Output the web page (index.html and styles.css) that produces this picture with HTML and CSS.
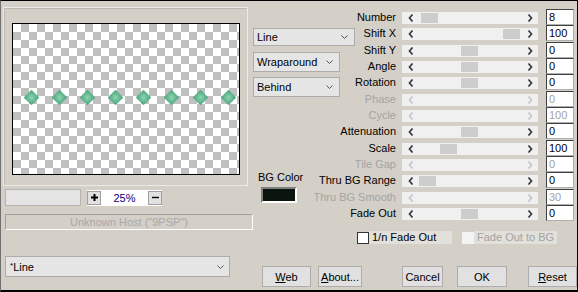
FILE: index.html
```html
<!DOCTYPE html>
<html lang="en">

<head>
    <meta charset="UTF-8">
    <title>Line Filter</title>
    <link rel="stylesheet" href="styles.css">
</head>

<body>
    <div class="dialog">
        <div class="main">
            <!-- Preview side -->
            <div class="left">
                <div class="preview">
                    <div class="canvas">
                        <div class="gem"></div>
                        <div class="gem"></div>
                        <div class="gem"></div>
                        <div class="gem"></div>
                        <div class="gem"></div>
                        <div class="gem"></div>
                        <div class="gem"></div>
                        <div class="gem"></div>
                    </div>
                </div>
                <div class="zoom-row">
                    <div class="zoom-field"></div>
                    <div class="zoom-ctl">
                        <span class="zoom-btn"><svg width="7" height="7" viewBox="0 0 7 7"><path d="M3.5 0v7M0 3.5h7" stroke="#000" stroke-width="2"/></svg></span>
                        <span class="zoom-val">25%</span>
                        <span class="zoom-btn"><svg width="7" height="7" viewBox="0 0 7 7"><path d="M0 3.5h7" stroke="#000" stroke-width="1.4"/></svg></span>
                    </div>
                </div>
                <div class="host">Unknown Host ("9PSP")</div>
            </div>

            <!-- Mode selects and background colour -->
            <div class="middle">
                <div class="select select-line">Line <svg class="chev" width="7" height="4" viewBox="0 0 7 4"><path d="M0.5 0.5l3 3 3-3"/></svg></div>
                <div class="select select-short gap-wrap">Wraparound <svg class="chev" width="7" height="4" viewBox="0 0 7 4"><path d="M0.5 0.5l3 3 3-3"/></svg></div>
                <div class="select select-short gap-behind">Behind <svg class="chev" width="7" height="4" viewBox="0 0 7 4"><path d="M0.5 0.5l3 3 3-3"/></svg></div>
                <div class="bg-label">BG Color</div>
                <div class="swatch"></div>
            </div>

            <!-- Parameter sliders -->
            <div class="params">
                <div class="grid">
                    <div class="label">Number</div>
                    <div class="scroll"><span class="arrow"><svg width="6" height="8" viewBox="0 0 6 8"><path d="M4.5 0.5L1.5 4l3 3.5"/></svg></span><span class="track"><span class="thumb" style="margin-left: 2px"></span></span><span class="arrow"><svg width="6" height="8" viewBox="0 0 6 8"><path d="M1.5 0.5L4.5 4l-3 3.5"/></svg></span></div>
                    <div class="value">8</div>

                    <div class="label">Shift X</div>
                    <div class="scroll"><span class="arrow"><svg width="6" height="8" viewBox="0 0 6 8"><path d="M4.5 0.5L1.5 4l3 3.5"/></svg></span><span class="track"><span class="thumb" style="margin-left: 84px"></span></span><span class="arrow"><svg width="6" height="8" viewBox="0 0 6 8"><path d="M1.5 0.5L4.5 4l-3 3.5"/></svg></span></div>
                    <div class="value">100</div>

                    <div class="label">Shift Y</div>
                    <div class="scroll"><span class="arrow"><svg width="6" height="8" viewBox="0 0 6 8"><path d="M4.5 0.5L1.5 4l3 3.5"/></svg></span><span class="track"><span class="thumb" style="margin-left: 42px"></span></span><span class="arrow"><svg width="6" height="8" viewBox="0 0 6 8"><path d="M1.5 0.5L4.5 4l-3 3.5"/></svg></span></div>
                    <div class="value">0</div>

                    <div class="label">Angle</div>
                    <div class="scroll"><span class="arrow"><svg width="6" height="8" viewBox="0 0 6 8"><path d="M4.5 0.5L1.5 4l3 3.5"/></svg></span><span class="track"><span class="thumb" style="margin-left: 42px"></span></span><span class="arrow"><svg width="6" height="8" viewBox="0 0 6 8"><path d="M1.5 0.5L4.5 4l-3 3.5"/></svg></span></div>
                    <div class="value">0</div>

                    <div class="label">Rotation</div>
                    <div class="scroll"><span class="arrow"><svg width="6" height="8" viewBox="0 0 6 8"><path d="M4.5 0.5L1.5 4l3 3.5"/></svg></span><span class="track"><span class="thumb" style="margin-left: 42px"></span></span><span class="arrow"><svg width="6" height="8" viewBox="0 0 6 8"><path d="M1.5 0.5L4.5 4l-3 3.5"/></svg></span></div>
                    <div class="value">0</div>

                    <div class="label off">Phase</div>
                    <div class="scroll off"><span class="arrow"><svg width="6" height="8" viewBox="0 0 6 8"><path d="M4.5 0.5L1.5 4l3 3.5"/></svg></span><span class="track"></span><span class="arrow"><svg width="6" height="8" viewBox="0 0 6 8"><path d="M1.5 0.5L4.5 4l-3 3.5"/></svg></span></div>
                    <div class="value off">0</div>

                    <div class="label off">Cycle</div>
                    <div class="scroll off"><span class="arrow"><svg width="6" height="8" viewBox="0 0 6 8"><path d="M4.5 0.5L1.5 4l3 3.5"/></svg></span><span class="track"></span><span class="arrow"><svg width="6" height="8" viewBox="0 0 6 8"><path d="M1.5 0.5L4.5 4l-3 3.5"/></svg></span></div>
                    <div class="value off">100</div>

                    <div class="label">Attenuation</div>
                    <div class="scroll"><span class="arrow"><svg width="6" height="8" viewBox="0 0 6 8"><path d="M4.5 0.5L1.5 4l3 3.5"/></svg></span><span class="track"><span class="thumb" style="margin-left: 42px"></span></span><span class="arrow"><svg width="6" height="8" viewBox="0 0 6 8"><path d="M1.5 0.5L4.5 4l-3 3.5"/></svg></span></div>
                    <div class="value">0</div>

                    <div class="label">Scale</div>
                    <div class="scroll"><span class="arrow"><svg width="6" height="8" viewBox="0 0 6 8"><path d="M4.5 0.5L1.5 4l3 3.5"/></svg></span><span class="track"><span class="thumb" style="margin-left: 21px"></span></span><span class="arrow"><svg width="6" height="8" viewBox="0 0 6 8"><path d="M1.5 0.5L4.5 4l-3 3.5"/></svg></span></div>
                    <div class="value">100</div>

                    <div class="label off">Tile Gap</div>
                    <div class="scroll off"><span class="arrow"><svg width="6" height="8" viewBox="0 0 6 8"><path d="M4.5 0.5L1.5 4l3 3.5"/></svg></span><span class="track"></span><span class="arrow"><svg width="6" height="8" viewBox="0 0 6 8"><path d="M1.5 0.5L4.5 4l-3 3.5"/></svg></span></div>
                    <div class="value off">0</div>

                    <div class="label">Thru BG Range</div>
                    <div class="scroll"><span class="arrow"><svg width="6" height="8" viewBox="0 0 6 8"><path d="M4.5 0.5L1.5 4l3 3.5"/></svg></span><span class="track"><span class="thumb" style="margin-left: 0px"></span></span><span class="arrow"><svg width="6" height="8" viewBox="0 0 6 8"><path d="M1.5 0.5L4.5 4l-3 3.5"/></svg></span></div>
                    <div class="value">0</div>

                    <div class="label off">Thru BG Smooth</div>
                    <div class="scroll off"><span class="arrow"><svg width="6" height="8" viewBox="0 0 6 8"><path d="M4.5 0.5L1.5 4l3 3.5"/></svg></span><span class="track"></span><span class="arrow"><svg width="6" height="8" viewBox="0 0 6 8"><path d="M1.5 0.5L4.5 4l-3 3.5"/></svg></span></div>
                    <div class="value off">30</div>

                    <div class="label">Fade Out</div>
                    <div class="scroll"><span class="arrow"><svg width="6" height="8" viewBox="0 0 6 8"><path d="M4.5 0.5L1.5 4l3 3.5"/></svg></span><span class="track"><span class="thumb" style="margin-left: 42px"></span></span><span class="arrow"><svg width="6" height="8" viewBox="0 0 6 8"><path d="M1.5 0.5L4.5 4l-3 3.5"/></svg></span></div>
                    <div class="value">0</div>
                </div>

                <div class="checks">
                    <span class="check-box"></span>
                    <span class="check-text">1/n Fade Out</span>
                    <span class="check-box off"></span>
                    <span class="check-text off">Fade Out to BG</span>
                </div>
            </div>
        </div>

        <div class="footer">
            <div class="select select-wide"><span><span class="star">*</span>Line</span> <svg class="chev" width="7" height="4" viewBox="0 0 7 4"><path d="M0.5 0.5l3 3 3-3"/></svg></div>
            <div class="btn btn-web"><span><u>W</u>eb</span></div>
            <div class="btn btn-about"><span><u>A</u>bout...</span></div>
            <div class="btn btn-cancel">Cancel</div>
            <div class="btn btn-ok">OK</div>
            <div class="btn btn-reset"><span><u>R</u>eset</span></div>
        </div>
    </div>
</body>

</html>
```

FILE: styles.css
```css
body {
    margin: 0;
    font-family: "Liberation Sans", Arial, sans-serif;
    font-size: 11px;
    color: #000;
}

.dialog {
    width: 578px;
    height: 292px;
    box-sizing: border-box;
    background: #d4d0c8;
    border-top: 1px solid #000;
    border-left: 1px solid #707070;
    border-right: 1px solid #000;
    border-bottom: 2px solid #000;
    display: flex;
    flex-direction: column;
}

.main {
    display: flex;
    height: 255px;
}

/* Preview */
.left {
    width: 252px;
    flex: none;
}

.preview {
    margin: 6px 0 0 2px;
    width: 245px;
    height: 179px;
    box-sizing: border-box;
    border: 1px solid #eceae5;
    box-shadow: inset 1px 1px 0 #bdb9b0;
    padding: 15px 0 0 8px;
}

.canvas {
    width: 228px;
    height: 152px;
    box-sizing: border-box;
    border: 1px solid #000;
    background-color: #fff;
    background-image: conic-gradient(#c0c0c0 25%, #fff 0 50%, #c0c0c0 0 75%, #fff 0);
    background-size: 16px 16px;
    display: flex;
    align-items: flex-start;
    padding: 68px 0 0 13px;
    gap: 17.1px;
}

.gem {
    flex: none;
    width: 11px;
    height: 11px;
    border-radius: 1px;
    transform: rotate(45deg);
    background: radial-gradient(circle, #8dd4b0 0%, #64b991 55%, #47a078 100%);
}

.zoom-row {
    display: flex;
    align-items: center;
    margin: 3px 0 0 4px;
    height: 17px;
}

.zoom-field {
    width: 76px;
    height: 17px;
    box-sizing: border-box;
    background: #e4e4e4;
    border: 1px solid #b4b4b4;
}

.zoom-ctl {
    margin-left: 6px;
    width: 75px;
    height: 16px;
    background: #fff;
    display: flex;
    align-items: center;
    justify-content: space-between;
}

.zoom-btn {
    width: 14px;
    height: 14px;
    box-sizing: border-box;
    background: #e1e1e1;
    border: 1px solid #a0a0a0;
    display: flex;
    align-items: center;
    justify-content: center;
}

.zoom-val {
    color: #000080;
}

.host {
    margin: 8px 0 0 4px;
    width: 248px;
    height: 16px;
    box-sizing: border-box;
    border: 1px solid;
    border-color: #a0a0a0 #fff #fff #a0a0a0;
    color: #a8a8a8;
    text-align: center;
    line-height: 14px;
}

/* Selects */
.select {
    display: flex;
    align-items: center;
    justify-content: space-between;
    box-sizing: border-box;
    height: 20px;
    background: #e5e5e5;
    border: 1px solid #acacac;
    padding: 0 6px 0 3px;
}

.chev path {
    fill: none;
    stroke: #555;
    stroke-width: 1;
}

.middle {
    width: 103px;
    flex: none;
}

.select-line {
    width: 102px;
    height: 18px;
    margin-top: 27px;
}

.select-short {
    width: 87px;
}

.gap-wrap {
    margin-top: 6px;
}

.gap-behind {
    margin-top: 5px;
}

.bg-label {
    margin: 73px 0 0 5px;
    line-height: 14px;
}

.swatch {
    margin: 3px 0 0 8px;
    width: 36px;
    height: 16px;
    box-sizing: border-box;
    border: 2px solid;
    border-color: #808080 #fff #fff #808080;
    background: #0b1510;
}

/* Parameters */
.params {
    flex: 1;
    padding-top: 8px;
}

.grid {
    display: grid;
    grid-template-columns: 40px 142px 36px;
    grid-auto-rows: 16.33px;
}

.label {
    display: flex;
    justify-content: flex-end;
    white-space: nowrap;
    line-height: 16px;
}

.scroll {
    justify-self: end;
    align-self: start;
    width: 136px;
    height: 12px;
    margin-top: 3px;
    background: #f0f0f0;
    display: flex;
    align-items: center;
}

.arrow {
    width: 17px;
    flex: none;
    display: flex;
    justify-content: center;
}

.arrow path {
    fill: none;
    stroke: #3a3a3a;
    stroke-width: 1.7;
}

.track {
    flex: 1;
    display: flex;
    align-items: center;
}

.thumb {
    width: 17px;
    height: 10px;
    background: #cdcdcd;
}

.value {
    justify-self: end;
    width: 28px;
    height: 16px;
    box-sizing: border-box;
    border: 1px solid;
    border-color: #404040 #b0b0b0 #b0b0b0 #404040;
    background: #fff;
    padding-left: 2px;
    line-height: 14px;
}

.label.off,
.value.off {
    color: #a3a3a3;
}

.scroll.off .arrow path {
    stroke: #c6c6c6;
}

.checks {
    display: flex;
    align-items: center;
    margin-top: 10px;
    height: 13px;
}

.check-box {
    width: 12px;
    height: 12px;
    box-sizing: border-box;
    border: 1px solid #333;
    background: #fff;
    margin-left: 1px;
}

.check-box.off {
    margin-left: 10px;
    border-color: #f3f3f3;
    background: #f3f3f3;
}

.check-text {
    width: 83px;
    height: 13px;
    box-sizing: border-box;
    padding-left: 3px;
    line-height: 13px;
    background: #e2e0db;
}

.check-text.off {
    color: #a3a3a3;
}

/* Footer */
.footer {
    display: flex;
    align-items: flex-start;
}

.select-wide {
    margin-left: 4px;
    width: 225px;
    height: 21px;
    padding: 0 5px 0 4px;
}

.star {
    font-size: 8px;
    vertical-align: 3px;
}

.btn {
    margin-top: 10px;
    height: 21px;
    box-sizing: border-box;
    background: #e1e1e1;
    border: 1px solid #adadad;
    display: flex;
    align-items: center;
    justify-content: center;
}

.btn-web {
    margin-left: 32px;
    width: 49px;
}

.btn-about {
    margin-left: 7px;
    width: 44px;
}

.btn-cancel {
    margin-left: 40px;
    width: 41px;
}

.btn-ok {
    margin-left: 14px;
    width: 50px;
}

.btn-reset {
    margin-left: 21px;
    width: 49px;
}
```
